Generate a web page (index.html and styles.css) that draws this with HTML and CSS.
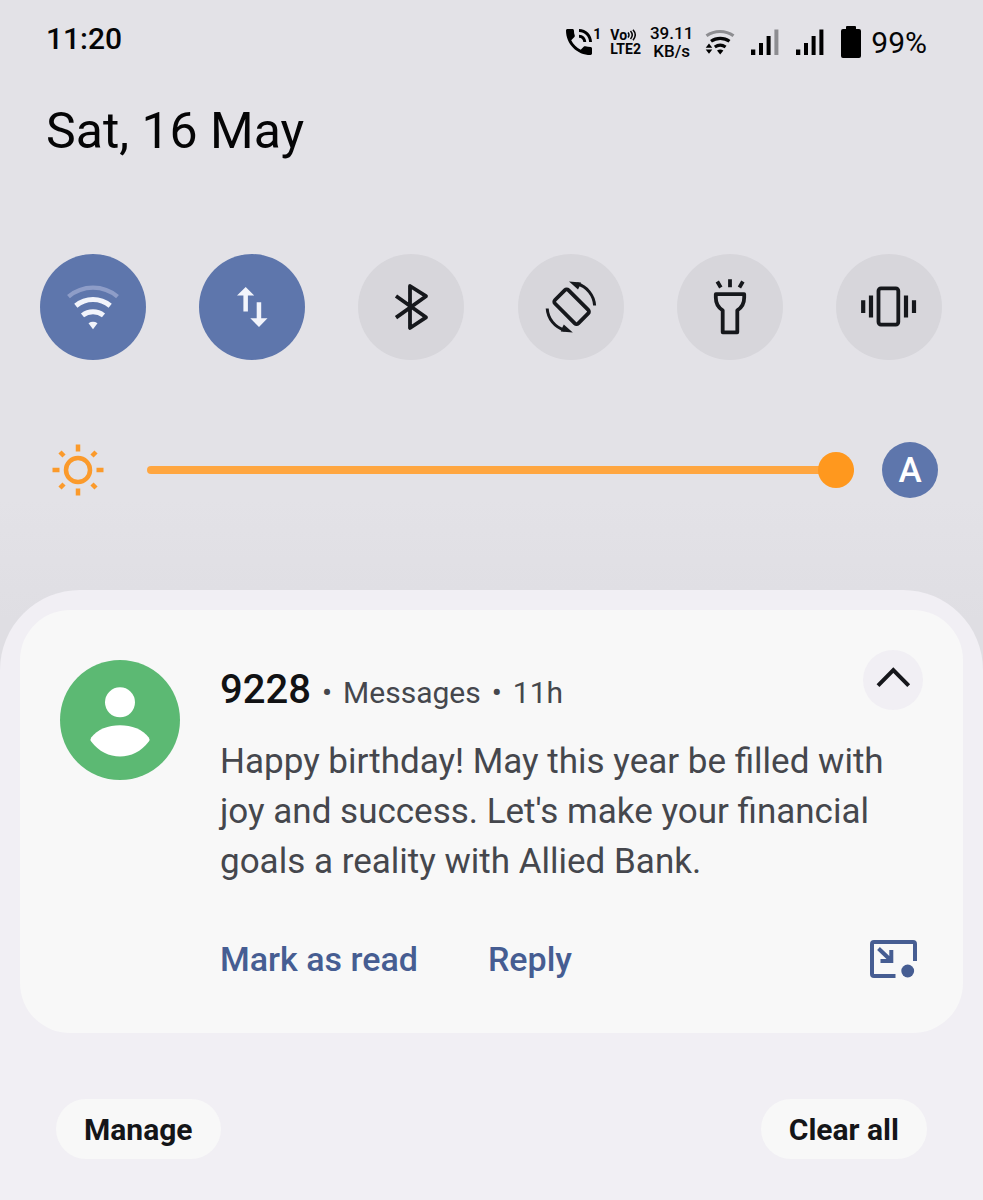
FILE: index.html
```html
<!DOCTYPE html>
<html lang="en">
<head>
<meta charset="utf-8">
<meta name="viewport" content="width=device-width, initial-scale=1">
<title>Notification shade</title>
<link rel="stylesheet" href="styles.css">
</head>
<body>
<header class="status">
  <time class="clock">11:20</time>
  <div class="indicators">
    <svg class="call" viewBox="3 3 18 18" aria-hidden="true"><path d="M20 15.500c-1.250 0-2.450-.2-3.570-.57-.35-.11-.74-.03-1.020.24l-2.200 2.200c-2.830-1.440-5.150-3.750-6.590-6.590l2.200-2.210c.28-.26.36-.65.25-1C8.700 6.450 8.500 5.250 8.500 4c0-.55-.45-1-1-1H4c-.55 0-1 .45-1 1 0 9.390 7.610 17 17 17 .55 0 1-.45 1-1v-3.500c0-.55-.45-1-1-1zM19 12h2c0-4.970-4.030-9-9-9v2c3.870 0 7 3.130 7 7zm-4 0h2c0-2.760-2.240-5-5-5v2c1.660 0 3 1.340 3 3z"/></svg>
    <span class="line">1</span>
    <span class="volte">
      <span class="volte-top">Vo<svg class="waves" viewBox="0 0 9 12" aria-hidden="true"><path d="M1 3.500q2 2.500 0 5M3.500 2q3.500 4 0 8M6 .8q4.500 5.200 0 10.400"/></svg></span>
      <span class="volte-bottom">LTE2</span>
    </span>
    <span class="speed"><span>39.11</span><span>KB/s</span></span>
    <svg class="wifi-status" viewBox="0 0 30 26" aria-hidden="true">
      <path class="arc dim" d="M1.500 6.800A23.400 23.400 0 0 1 28.500 6.800"/>
      <path class="arc" d="M6 12.300A16 16 0 0 1 24.500 12.300"/>
      <path class="arc" d="M9.800 18A9.500 9.500 0 0 1 20.600 18"/>
      <path d="M12 21.500q3.200-2 6.400 0L15.200 25.500zM4 14.500L.7 18.700h6.600zM.7 20.500h6.600L4 24.700z"/>
    </svg>
    <svg class="signal" viewBox="0 0 28 26" aria-hidden="true"><path d="M0 20.500h4.300V26H0zM8 14h4v12H8zM15.600 7h4v19h-4z"/><path class="faded" d="M23.400.5h4V26h-4z"/></svg>
    <svg class="signal" viewBox="0 0 28 26" aria-hidden="true"><path d="M0 20.500h4.300V26H0zM8 14h4v12H8zM15.600 7h4v19h-4zM23.400.5h4V26h-4z"/></svg>
    <svg class="battery" viewBox="0 0 20 32" aria-hidden="true"><path d="M6 0h8q1 0 1 1v2h3q2 0 2 2v25q0 2-2 2H2q-2 0-2-2V5q0-2 2-2h3V1q0-1 1-1z"/></svg>
    <span class="percent">99%</span>
  </div>
</header>

<h1 class="date">Sat, 16 May</h1>

<section class="tiles" aria-label="Quick settings">
  <button class="tile on" aria-label="Wi-Fi"><svg viewBox="0 0 106 106">
    <g fill="none" stroke="#f2f4fb"><path d="M28.500 42.600A37.800 37.800 0 0 1 77.500 42.600" stroke="#8e9dc8" stroke-width="4.300"/><path d="M35.800 51.800A27 27 0 0 1 70.200 51.800" stroke-width="5"/><path d="M42.500 61.400A17 17 0 0 1 63.500 61.400" stroke-width="5"/></g>
    <path fill="#f2f4fb" d="M48.500 69.200Q53 66.400 57.500 69.200L53 75.200z"/></svg></button>
  <button class="tile on" aria-label="Mobile data"><svg viewBox="0 0 106 106"><path fill="#f2f4fb" d="M46.700 33L55.200 41.600H48.900V57.500H44.400V41.600H38zM57.700 48.300H62.200V64.300H68.500L60 73 51.300 64.300H57.700z"/></svg></button>
  <button class="tile" aria-label="Bluetooth"><svg class="stroke" viewBox="0 0 106 106"><path stroke-linejoin="round" d="M38 42L68 63.300 52 74V32L68 42.200 38 63.600"/></svg></button>
  <button class="tile" aria-label="Auto rotate"><svg class="stroke" viewBox="0 0 106 106"><rect x="-16.500" y="-9.500" width="33" height="19" rx="2.500" transform="translate(53.600 52.700) rotate(45)"/>
    <g id="turn"><path stroke-width="3" d="M76.600 51.500A24 24 0 0 0 59 29.800"/><path fill="#16181c" stroke="none" d="M51 27.600L63 28.600 61.500 32.600 60 35.500z"/></g>
    <use href="#turn" transform="rotate(180 52.900 53)"/></svg></button>
  <button class="tile" aria-label="Flashlight"><svg class="stroke" viewBox="0 0 106 106"><path stroke-linejoin="round" d="M38.800 40.200H67.200V43.500C67.200 49 65 53.500 60.300 56.300V78.300H45.700V56.300C41 53.500 38.800 49 38.800 43.500z"/><path d="M53 25.300v8M40.300 27.500l3.500 6M65.900 27.500l-3.500 6"/></svg></button>
  <button class="tile" aria-label="Vibrate"><svg class="stroke" viewBox="0 0 106 106"><rect x="42.500" y="34.300" width="19.800" height="36.300" rx="2.500"/><path d="M35 41.500v22M27.200 46.300v12.700M70 41.500v22M78 46.300v12.700" stroke-width="4.200"/></svg></button>
</section>

<section class="brightness" aria-label="Brightness">
  <svg class="sun" viewBox="-26 -26 52 52" aria-hidden="true"><circle r="12"/><path d="M0-25.500v7M0 18.500v7M-25.500 0h7M18.500 0h7M-18-18l4 4M18-18l-4 4M-18 18l4-4M18 18l-4-4"/></svg>
  <input class="slider" type="range" min="0" max="100" value="100" aria-label="Screen brightness">
  <button class="auto" aria-label="Automatic brightness">A</button>
</section>

<main class="shade">
  <article class="card">
    <svg class="avatar" viewBox="0 0 120 120" aria-hidden="true"><circle cx="60" cy="60" r="60" fill="#5cb973"/><circle cx="60" cy="42.300" r="15" fill="#fff"/><path fill="#fff" d="M31.200 77.500C43 61 77 61 88.800 77.500Q90.200 79.500 88.800 81.500C74 101.500 46 101.500 31.200 81.500Q29.800 79.500 31.200 77.500z"/></svg>
    <div class="content">
      <div class="heading"><h2 class="sender">9228</h2><span class="dot">•</span><span>Messages</span><span class="dot">•</span><span>11h</span></div>
      <p class="message">Happy birthday! May this year be filled with joy and success. Let's make your financial goals a reality with Allied Bank.</p>
      <div class="actions">
        <button class="action">Mark as read</button>
        <button class="action">Reply</button>
        <button class="popup" aria-label="Open in pop-up view"><svg viewBox="0 0 47 38"><path d="M45 21V4q0-2-2-2H4Q2 2 2 4V34q0 2 2 2H25.500"/><path d="M8.500 8.500L21 20.500M21.300 10V21H10.500"/><circle cx="37.700" cy="31" r="6.400"/></svg></button>
      </div>
    </div>
    <button class="collapse" aria-label="Collapse"><svg viewBox="0 0 60 60"><path d="M15 35.700L30.300 20 45.700 35.700"/></svg></button>
  </article>
  <footer class="footer">
    <button class="pill">Manage</button>
    <button class="pill">Clear all</button>
  </footer>
</main>
</body>
</html>
```

FILE: styles.css
```css
* { box-sizing: border-box; }

body {
  margin: 0;
  min-height: 100vh;
  display: flex;
  flex-direction: column;
  background: linear-gradient(#e3e2e7 0, #e3e2e7 500px, #dfdee3 620px);
  color: #050506;
  font-family: Roboto, "Liberation Sans", sans-serif;
}

button {
  padding: 0;
  border: 0;
  background: none;
  color: inherit;
  font: inherit;
  cursor: pointer;
}

svg { display: block; }

h1, h2, p { margin: 0; }

/* Status bar */
.status {
  display: flex;
  justify-content: space-between;
  align-items: flex-start;
  padding: 20px 56px 0 46px;
  font-size: 30px;
}

.clock { line-height: 38px; font-weight: 500; }

.indicators {
  display: flex;
  align-items: center;
  height: 46px;
}

.call { width: 26px; height: 26px; }

.line {
  align-self: flex-start;
  margin: 7px 9px 0 1px;
  font-size: 14px;
  line-height: 16px;
  font-weight: 700;
}

.volte {
  display: flex;
  flex-direction: column;
  margin-right: 9px;
  font-size: 14px;
  line-height: 17px;
  font-weight: 700;
}

.volte-top,
.volte-bottom { height: 13px; line-height: 13px; }

.volte-top { display: flex; }

.volte { gap: 1px; }

.waves {
  width: 9px;
  height: 12px;
  fill: none;
  stroke: currentColor;
  stroke-width: 1.5;
}

.speed {
  display: flex;
  flex-direction: column;
  align-items: center;
  margin-right: 12px;
  font-size: 17px;
  line-height: 18px;
  font-weight: 500;
}

.wifi-status { width: 30px; height: 26px; margin-right: 16px; }
.arc { fill: none; stroke: currentColor; stroke-width: 3.2; }
.dim { stroke: #8d8d91; }
.faded { fill: #8d8d91; }
.signal { width: 28px; height: 26px; margin-right: 17px; }
.battery { width: 20px; height: 32px; margin-right: 10px; }

.indicators { margin-top: -1px; }

.date {
  margin-top: 35px;
  padding: 0 46px;
  font-size: 50px;
  line-height: 62px;
  font-weight: 400;
}

/* Quick settings */
.tiles {
  display: flex;
  justify-content: space-between;
  margin-top: 92px;
  padding: 0 41px 0 40px;
}

.tile {
  width: 106px;
  height: 106px;
  border-radius: 50%;
  background: #d7d6db;
}

.tile.on { background: #5e76ac; }

.stroke {
  fill: none;
  stroke: #16181c;
  stroke-width: 3.8;
}

.brightness {
  display: flex;
  align-items: center;
  margin: 82px 0 92px;
  padding: 0 45px 0 52px;
}

.sun {
  width: 52px;
  height: 52px;
  fill: none;
  stroke: #fb9a2b;
  stroke-width: 4.5;
}

.slider {
  flex: 1;
  min-width: 0;
  height: 36px;
  margin: 0 28px 0 43px;
  appearance: none;
  background: none;
}

.slider::-webkit-slider-runnable-track {
  height: 8px;
  border-radius: 4px;
  background: #ffa640;
}

.slider::-webkit-slider-thumb {
  appearance: none;
  width: 36px;
  height: 36px;
  margin-top: -14px;
  border-radius: 50%;
  background: #ff981e;
}

.auto {
  width: 56px;
  height: 56px;
  border-radius: 50%;
  background: #5e76ac;
  color: #fff;
  font-size: 35px;
  font-weight: 500;
}

/* Notifications */
.shade {
  flex: 1;
  padding: 20px;
  border-radius: 80px 80px 0 0;
  background: #f1eff4;
}

.card {
  display: flex;
  align-items: flex-start;
  position: relative;
  padding: 50px 40px 49px;
  border-radius: 50px;
  background: #f8f8f8;
}

.avatar { flex: none; width: 120px; height: 120px; }

.content { flex: 1; margin-left: 40px; }

.heading {
  display: flex;
  align-items: baseline;
  gap: 11px;
  height: 60px;
  padding-right: 72px;
  color: #45474d;
  font-size: 30px;
  line-height: 60px;
}

.sender {
  color: #111214;
  font-size: 40px;
  line-height: 60px;
  font-weight: 500;
}

.message {
  margin-top: 17px;
  color: #45474d;
  font-size: 35px;
  line-height: 50px;
}

.actions {
  display: flex;
  align-items: center;
  gap: 70px;
  margin-top: 47px;
  color: #465d92;
  font-size: 34px;
  line-height: 50px;
  font-weight: 500;
}

.popup { margin: 0 6px 0 auto; }

.popup svg {
  width: 47px;
  height: 38px;
  fill: none;
  stroke: currentColor;
  stroke-width: 4;
}

.popup circle { fill: currentColor; stroke: none; }

.collapse {
  position: absolute;
  top: 40px;
  right: 40px;
  width: 60px;
  height: 60px;
  border-radius: 50%;
  background: #f1eff4;
}

.collapse path {
  fill: none;
  stroke: #16171b;
  stroke-width: 4;
}

.footer {
  display: flex;
  justify-content: space-between;
  margin-top: 66px;
  padding: 0 36px;
}

.pill {
  height: 60px;
  padding: 0 28px;
  border-radius: 30px;
  background: #f8f8f8;
  color: #141518;
  font-size: 30px;
  font-weight: 700;
}
```
